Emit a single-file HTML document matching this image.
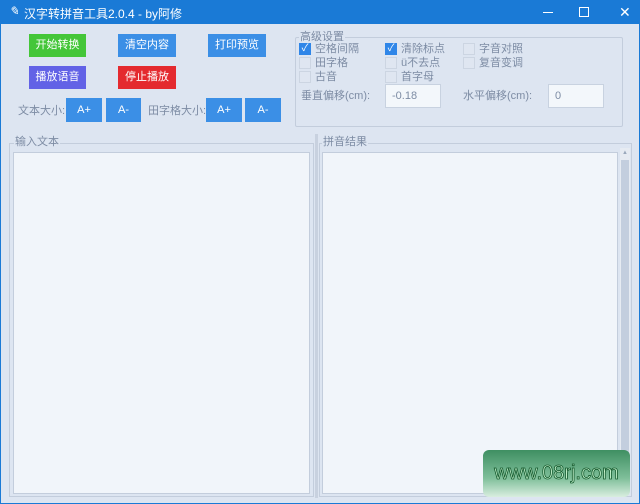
<!DOCTYPE html>
<html><head><meta charset="utf-8"><style>
*{box-sizing:border-box;margin:0;padding:0}
body{width:640px;height:504px;overflow:hidden;background:#dde5f1;font-family:"Liberation Sans","Noto Sans CJK SC",sans-serif;font-size:11px;color:#7a8aa0;position:relative}
.a{position:absolute}
.title{left:0;top:0;width:640px;height:24px;background:#1a7ad6;color:#fff;font-size:12px}
.btn{position:absolute;color:#fff;font-size:11px;display:flex;align-items:center;justify-content:center;height:23px;line-height:1}
.blue{background:#3b8fe6}
.cb{position:absolute;width:12px;height:12px;border:1px solid #ccd5e2;background:#dfe6f1}
.cb.on{background:#2f86e8;border-color:#2f86e8;color:#fff;font-size:10px;line-height:10px;text-align:center}
.lbl{position:absolute;font-size:11px;color:#7d8ca4;line-height:13px}
.inp{position:absolute;background:#f3f7fb;border:1px solid #c8d2e0;color:#7d8ca4;padding:0 6px;font-size:11px;display:flex;align-items:center}
.ta{position:absolute;background:#f1f5fa;border:1px solid #c3cddc}
</style></head><body>
<div class="a" style="left:0;top:0;width:640px;height:504px;border:1px solid #1a7ad6;border-top:none"></div>
<div class="a title">
 <span class="a" style="left:9px;top:4px;font-size:12px;font-style:italic">✎</span>
 <span class="a" style="left:24px;top:5px">汉字转拼音工具2.0.4 - by阿修</span>
 <span class="a" style="left:543px;top:12px;width:10px;height:1px;background:#fff"></span>
 <span class="a" style="left:579px;top:7px;width:10px;height:10px;border:1px solid #fff"></span>
 <span class="a" style="left:619px;top:4px;font-size:14px">✕</span>
</div>
<div class="btn" style="left:29px;top:34px;width:57px;background:#44c639">开始转换</div>
<div class="btn blue" style="left:118px;top:34px;width:58px">清空内容</div>
<div class="btn blue" style="left:208px;top:34px;width:58px">打印预览</div>
<div class="btn" style="left:29px;top:66px;width:57px;background:#6262e6">播放语音</div>
<div class="btn" style="left:118px;top:66px;width:58px;background:#e42a2f">停止播放</div>
<div class="lbl" style="left:18px;top:105px">文本大小:</div>
<div class="btn blue" style="left:66px;top:98px;width:36px;height:24px">A+</div>
<div class="btn blue" style="left:106px;top:98px;width:35px;height:24px">A-</div>
<div class="lbl" style="left:148px;top:105px">田字格大小:</div>
<div class="btn blue" style="left:206px;top:98px;width:36px;height:24px">A+</div>
<div class="btn blue" style="left:245px;top:98px;width:36px;height:24px">A-</div>

<div class="a" style="left:295px;top:37px;width:328px;height:90px;border:1px solid #c3cddc;border-radius:2px"></div>
<div class="lbl" style="left:299px;top:31px;background:#dde5f1;padding:0 1px">高级设置</div>
<div class="cb on" style="left:299px;top:43px">✓</div><div class="lbl" style="left:315px;top:43px">空格间隔</div>
<div class="cb" style="left:299px;top:57px"></div><div class="lbl" style="left:315px;top:57px">田字格</div>
<div class="cb" style="left:299px;top:71px"></div><div class="lbl" style="left:315px;top:71px">古音</div>
<div class="cb on" style="left:385px;top:43px">✓</div><div class="lbl" style="left:401px;top:43px">清除标点</div>
<div class="cb" style="left:385px;top:57px"></div><div class="lbl" style="left:401px;top:57px">ü不去点</div>
<div class="cb" style="left:385px;top:71px"></div><div class="lbl" style="left:401px;top:71px">首字母</div>
<div class="cb" style="left:463px;top:43px"></div><div class="lbl" style="left:479px;top:43px">字音对照</div>
<div class="cb" style="left:463px;top:57px"></div><div class="lbl" style="left:479px;top:57px">复音变调</div>
<div class="lbl" style="left:301px;top:90px">垂直偏移(cm):</div>
<div class="inp" style="left:385px;top:84px;width:56px;height:24px">-0.18</div>
<div class="lbl" style="left:463px;top:90px">水平偏移(cm):</div>
<div class="inp" style="left:548px;top:84px;width:56px;height:24px">0</div>

<div class="a" style="left:9px;top:143px;width:305px;height:354px;border:1px solid #c3cddc"></div>
<div class="lbl" style="left:14px;top:136px;background:#dde5f1;padding:0 1px">输入文本</div>
<div class="ta" style="left:13px;top:152px;width:297px;height:342px"></div>
<div class="a" style="left:315px;top:134px;width:3px;height:364px;background:#c8d1df"></div>
<div class="a" style="left:319px;top:143px;width:313px;height:354px;border:1px solid #c3cddc"></div>
<div class="lbl" style="left:322px;top:136px;background:#dde5f1;padding:0 1px">拼音结果</div>
<div class="ta" style="left:322px;top:152px;width:296px;height:342px"></div>
<div class="a" style="left:620px;top:148px;width:10px;height:346px;background:#e6ebf2"></div>
<div class="a" style="left:622px;top:150px;font-size:6px;color:#9aa8bb">▲</div>
<div class="a" style="left:621px;top:160px;width:8px;height:330px;background:#c3cede"></div>

<div class="a" style="left:483px;top:450px;width:147px;height:47px;border-radius:6px;background:linear-gradient(#3f8f62,#7fbf9a 60%,#d9eee0);color:#c8f5cf;font-size:20px;line-height:47px;text-align:center;font-family:'Liberation Sans',sans-serif;-webkit-text-stroke:0.8px #145a2e">www.08rj.com</div>
</body></html>
